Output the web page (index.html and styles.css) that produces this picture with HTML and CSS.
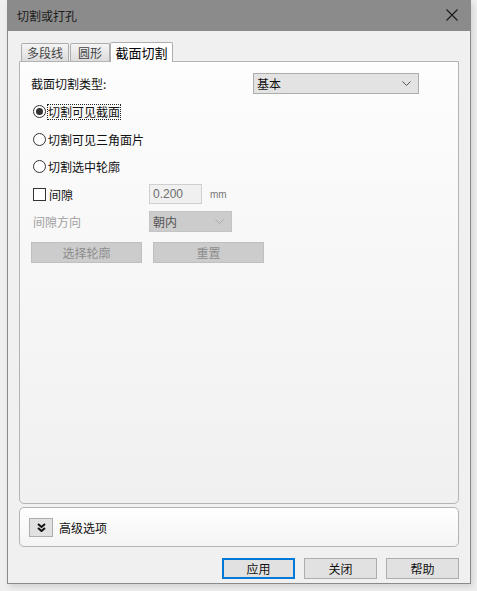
FILE: index.html
```html
<!DOCTYPE html>
<html lang="zh">
<head>
<meta charset="utf-8">
<link rel="stylesheet" href="styles.css">
</head>
<body>
<div class="window">
  <div class="titlebar">
    <span class="title">切割或打孔</span>
    <svg class="close" width="12" height="12" viewBox="0 0 12 12"><path d="M0.5 0.5L11.5 11.5M11.5 0.5L0.5 11.5" stroke="#1a1a1a" stroke-width="1.1" fill="none"/></svg>
  </div>
  <div class="body">
    <div class="tabs">
      <div class="tab t1">多段线</div>
      <div class="tab t2">圆形</div>
      <div class="tab active">截面切割</div>
    </div>
    <div class="panel">
      <div class="row type-row">
        <span class="label">截面切割类型:</span>
        <div class="combo main-combo"><span>基本</span><svg class="chev" width="9" height="5" viewBox="0 0 9 5"><path d="M0.5 0.5L4.5 4.5L8.5 0.5" stroke="#555" fill="none"/></svg></div>
      </div>
      <div class="row radio-row first">
        <span class="radio checked"><span class="dot"></span></span>
        <span class="focus">切割可见截面</span>
      </div>
      <div class="row radio-row">
        <span class="radio"></span>
        <span>切割可见三角面片</span>
      </div>
      <div class="row radio-row">
        <span class="radio"></span>
        <span>切割选中轮廓</span>
      </div>
      <div class="row gap-row">
        <span class="check-label"><span class="check"></span><span>间隙</span></span>
        <div class="input">0.200</div>
        <span class="unit">mm</span>
      </div>
      <div class="row dir-row">
        <span class="disabled-label">间隙方向</span>
        <div class="combo dis-combo"><span>朝内</span><svg class="chev" width="9" height="5" viewBox="0 0 9 5"><path d="M0.5 0.5L4.5 4.5L8.5 0.5" stroke="#a8a8a8" fill="none"/></svg></div>
      </div>
      <div class="row btn-row">
        <div class="dbtn">选择轮廓</div>
        <div class="dbtn">重置</div>
      </div>
    </div>
    <div class="advanced">
      <div class="expand"><svg width="9" height="9" viewBox="0 0 9 9"><path d="M1 1L4.5 4L8 1M1 5L4.5 8L8 5" stroke="#111" stroke-width="2" fill="none"/></svg></div>
      <span>高级选项</span>
    </div>
    <div class="footer">
      <div class="btn default">应用</div>
      <div class="btn">关闭</div>
      <div class="btn">帮助</div>
    </div>
  </div>
</div>
</body>
</html>
```
FILE: styles.css
```css
* { box-sizing: border-box; }
html, body { margin: 0; padding: 0; }
body {
  background: #efefef;
  font-family: "Noto Sans CJK SC", "Noto Sans", sans-serif;
  font-size: 12px;
  color: #111;
  width: 477px;
  height: 591px;
  overflow: hidden;
}
.window {
  margin-left: 7px;
  width: 464px;
  height: 584px;
  border: 1px solid #8a8a8a;
  border-top: none;
  background: #f0f0f0;
  display: flex;
  flex-direction: column;
  box-shadow: 2px 3px 6px rgba(0,0,0,0.12);
}
.titlebar {
  height: 31px;
  background: #8b8b8b;
  display: flex;
  align-items: center;
  justify-content: space-between;
  padding: 0 12px 0 9px;
  flex: none;
}
.title { color: #1c1c1c; font-size: 12px; }
.close { margin-top: -1px; }
.body {
  flex: 1;
  display: flex;
  flex-direction: column;
  padding: 11px 11px 0 11px;
}
.tabs {
  display: flex;
  align-items: flex-end;
  height: 19px;
  padding-left: 2px;
  position: relative;
  z-index: 1;
}
.tab {
  height: 18px;
  border: 1px solid #adadad;
  border-bottom: none;
  background: linear-gradient(#f4f4f4, #dcdcdc);
  color: #444;
  line-height: 17px;
  font-size: 12px;
  margin-right: 1px;
  border-radius: 2px 2px 0 0;
  text-align: center;
}
.tab.t1 { width: 48px; }
.tab.t2 { width: 40px; }
.tab.active {
  height: 20px;
  width: 63px;
  background: #fff;
  color: #000;
  margin-left: -1px;
  margin-bottom: -1px;
  line-height: 20px;
  font-size: 13px;
}
.panel {
  height: 443px;
  border: 1px solid #b4b4b4;
  border-radius: 0 0 5px 5px;
  background: linear-gradient(#fdfdfd 0%, #f6f6f6 55%, #f0f0f0 100%);
  padding: 10px 0 0 11px;
  display: flex;
  flex-direction: column;
}
.row { display: flex; align-items: center; flex: none; }
.type-row { height: 22px; }
.type-row .label { width: 222px; }
.combo {
  height: 21px;
  border: 1px solid #adadad;
  background: #e3e3e3;
  display: flex;
  align-items: center;
  justify-content: space-between;
  padding: 0 7px 0 3px;
  font-size: 12px;
}
.main-combo { width: 166px; margin-top: 1px; }
.radio-row { height: 27.5px; padding-left: 2px; }
.radio-row.first { margin-top: 4px; }
.radio {
  width: 13px;
  height: 13px;
  border: 1px solid #333;
  border-radius: 50%;
  background: #fff;
  margin-right: 2px;
  display: flex;
  align-items: center;
  justify-content: center;
}
.radio .dot { width: 7px; height: 7px; border-radius: 50%; background: #333; }
.focus { outline: 1px dotted #222; outline-offset: 0; line-height: 14px; }
.gap-row { height: 27px; padding-left: 2px; }
.check-label { display: flex; align-items: center; width: 116px; }
.check {
  width: 13px; height: 13px;
  border: 1px solid #333;
  background: #fff;
  margin-right: 3px;
}
.input {
  width: 53px; height: 20px;
  border: 1px solid #cfcfcf;
  background: #f0f0f0;
  color: #6d6d6d;
  line-height: 18px;
  padding-left: 3px;
  font-size: 12px;
  font-family: "Liberation Sans", "Noto Sans CJK SC", sans-serif;
}
.unit { margin-left: 8px; color: #777; font-size: 10px; font-family: "Liberation Sans", sans-serif; }
.dir-row { height: 27px; padding-left: 2px; }
.disabled-label { color: #a0a0a0; width: 116px; }
.dis-combo { width: 83px; height: 21px; background: #cccccc; border-color: #c4c4c4; color: #555; }
.btn-row { gap: 11px; margin-top: 7px; }
.dbtn {
  width: 111px; height: 21px;
  border: 1px solid #bfbfbf;
  background: #cccccc;
  color: #8c8c8c;
  text-align: center;
  line-height: 19px;
  font-size: 12px;
}
.advanced {
  margin-top: 3px;
  height: 40px;
  border: 1px solid #b4b4b4;
  border-radius: 5px;
  background: linear-gradient(#ffffff, #f4f4f4);
  display: flex;
  align-items: center;
  padding-left: 9px;
  gap: 6px;
  font-size: 12px;
}
.expand {
  width: 24px; height: 19px;
  border: 1px solid #adadad;
  background: #e1e1e1;
  display: flex;
  align-items: center;
  justify-content: center;
}
.footer {
  display: flex;
  justify-content: flex-end;
  gap: 9px;
  margin-top: 11px;
}
.btn {
  width: 73px; height: 21px;
  border: 1px solid #adadad;
  background: #e1e1e1;
  text-align: center;
  line-height: 19px;
  font-size: 12px;
}
.btn.default { border: 2px solid #0078d7; line-height: 17px; }
```
